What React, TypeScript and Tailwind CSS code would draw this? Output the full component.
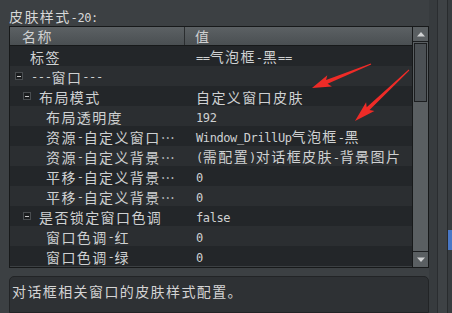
import React from "react";

const CJK = /[\u2000-\u206f\u3000-\u9fff\uff00-\uffef]/;

function Txt({ s }: { s: string }) {
  const runs: { t: string; c: boolean }[] = [];
  for (const ch of s) {
    const c = CJK.test(ch);
    const last = runs[runs.length - 1];
    if (last && last.c === c) last.t += ch;
    else runs.push({ t: ch, c });
  }
  return (
    <>
      {runs.map((r, i) =>
        r.c ? (
          <span key={i} className="font-['Noto_Sans_CJK_SC',sans-serif] text-[14px] tracking-[1.4px]">
            {r.t}
          </span>
        ) : (
          <span key={i} className="font-['DejaVu_Sans_Mono',monospace] text-[12px] tracking-[-0.4px]">
            {r.t}
          </span>
        )
      )}
    </>
  );
}

function MinusBox() {
  return (
    <div className="w-[8px] h-[8px] bg-[#1b1d1f] border border-[#4a4e51] flex items-center justify-center shrink-0">
      <div className="w-[4px] h-[1px] bg-[#c8c8c8]" />
    </div>
  );
}

type Row = { label: string; value: string; pl: number; box?: boolean };

const rows: Row[] = [
  { label: "标签", value: "==气泡框-黑==", pl: 20 },
  { label: "---窗口---", value: "", pl: 5, box: true },
  { label: "布局模式", value: "自定义窗口皮肤", pl: 13, box: true },
  { label: "布局透明度", value: "192", pl: 36 },
  { label: "资源-自定义窗口…", value: "Window_DrillUp气泡框-黑", pl: 36 },
  { label: "资源-自定义背景…", value: "(需配置)对话框皮肤-背景图片", pl: 36 },
  { label: "平移-自定义背景…", value: "0", pl: 36 },
  { label: "平移-自定义背景…", value: "0", pl: 36 },
  { label: "是否锁定窗口色调", value: "false", pl: 13, box: true },
  { label: "窗口色调-红", value: "0", pl: 36 },
  { label: "窗口色调-绿", value: "0", pl: 36 },
];

function arrowPoints(tx: number, ty: number, hx: number, hy: number, headLen: number, headW: number) {
  const dx = hx - tx;
  const dy = hy - ty;
  const L = Math.hypot(dx, dy);
  const ux = dx / L;
  const uy = dy / L;
  const nx = -uy;
  const ny = ux;
  const bx = hx - ux * headLen;
  const by = hy - uy * headLen;
  const bbx = bx - ux * 3;
  const bby = by - uy * 3;
  const p = (x: number, y: number) => `${x.toFixed(1)},${y.toFixed(1)}`;
  return [
    p(tx + nx * 0.5, ty + ny * 0.5),
    p(bx + nx * 2, by + ny * 2),
    p(bbx + nx * headW, bby + ny * headW),
    p(hx, hy),
    p(bbx - nx * headW, bby - ny * headW),
    p(bx - nx * 2, by - ny * 2),
    p(tx - nx * 0.5, ty - ny * 0.5),
  ].join(" ");
}

export default function App() {
  return (
    <div className="relative w-[452px] h-[313px] overflow-hidden bg-[#3c4043] flex text-[#cfd1d2]">
      {/* main panel */}
      <div className="w-[429px] flex flex-col shrink-0">
        <div className="h-[26px] pl-[9px] pt-[7px] leading-[18px] text-[#d8d8d8] whitespace-nowrap">
          <Txt s="皮肤样式-20:" />
        </div>
        <div className="ml-[9px] w-[420px] h-[242px] border border-[#17191a] flex">
          <div className="w-[402px] flex flex-col">
            <div className="h-[19px] flex bg-gradient-to-b from-[#5c6164] to-[#4a4f52] border-b border-[#17191a] shrink-0">
              <div className="w-[175px] border-r border-[#2a2d2f] pl-[12px] flex items-center leading-[18px] whitespace-nowrap">
                <Txt s="名称" />
              </div>
              <div className="flex-1 pl-[10px] flex items-center leading-[18px]">
                <Txt s="值" />
              </div>
            </div>
            {rows.map((r, i) => (
              <div
                key={i}
                className={`h-[20px] flex items-center shrink-0 ${i % 2 === 0 ? "bg-[#232629]" : "bg-[#2b2e31]"}`}
              >
                <div
                  className="w-[175px] flex items-center whitespace-nowrap overflow-hidden leading-[20px] pt-[2px]"
                  style={{ paddingLeft: r.pl }}
                >
                  {r.box && (
                    <div className="mr-[8px] -mt-[2px]">
                      <MinusBox />
                    </div>
                  )}
                  <Txt s={r.label} />
                </div>
                <div className="flex-1 pl-[11px] whitespace-nowrap overflow-hidden leading-[20px] pt-[2px]">
                  <Txt s={r.value} />
                </div>
              </div>
            ))}
          </div>
          {/* scrollbar */}
          <div className="w-[16px] border-l border-[#17191a] bg-[#5a5f62] flex flex-col">
            <div className="h-[15px] bg-[#5a5f62] border-b border-[#1c1e20] flex items-center justify-center shrink-0">
              <svg width="8" height="5" viewBox="0 0 8 5">
                <polygon points="4,0 8,4.5 0,4.5" fill="#d0d2d3" />
              </svg>
            </div>
            <div className="flex-1 pt-[1px] pl-[1px] pr-[1px]">
              <div className="h-[59px] border border-[#1c1e20] bg-[#4b5054]" />
            </div>
            <div className="h-[16px] bg-[#5a5f62] border-t border-[#1c1e20] flex items-center justify-center shrink-0">
              <svg width="8" height="5" viewBox="0 0 8 5">
                <polygon points="0,0.5 8,0.5 4,5" fill="#d0d2d3" />
              </svg>
            </div>
          </div>
        </div>
        <div className="mt-[8px] ml-[9px] w-[420px] flex-1 border border-[#222426] rounded-t-[5px] bg-[#2e3134] pl-[2px] pt-[5px] leading-[18px] text-[#d4d4d4] whitespace-nowrap">
          <Txt s="对话框相关窗口的皮肤样式配置。" />
        </div>
      </div>
      {/* right decorations */}
      <div className="w-[8px] bg-[#373b3e]" />
      <div className="w-[1px] bg-[#2a2d30]" />
      <div className="w-[9px] bg-[#3e4245]" />
      <div className="w-[1px] bg-[#282b2d]" />
      <div className="flex-1 bg-[#383c3f] flex flex-col">
        <div className="h-[230px]" />
        <div className="h-[20px] bg-[#4877c6]" />
      </div>
      {/* annotation arrows */}
      <svg className="absolute left-0 top-0" width="452" height="313" viewBox="0 0 452 313">
        <polygon points={arrowPoints(371, 64, 312, 88, 16, 6)} fill="#ee2b27" />
        <polygon points={arrowPoints(409, 70, 355, 121, 18, 6)} fill="#ee2b27" />
      </svg>
    </div>
  );
}
